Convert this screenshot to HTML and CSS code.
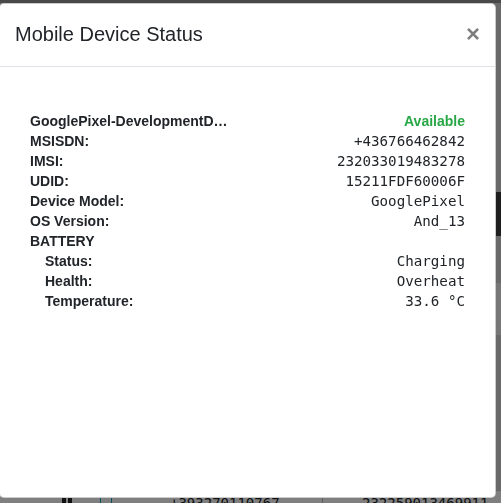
FILE: index.html
```html
<!DOCTYPE html>
<html lang="en">
<head>
  <meta charset="UTF-8" />
  <meta name="viewport" content="width=device-width, initial-scale=1.0"/>
  <title>Mobile Device Status</title>
  <link rel="stylesheet" href="styles.css">
</head>
<body>

  <div class="page">
    <div class="page-top"></div>
    <div class="page-gap first"></div>
    <div class="page-row dark"><span class="row-end"></span></div>
    <div class="page-gap second"></div>
    <div class="page-row light"><span class="row-end"></span></div>
    <div class="page-gap third"></div>
    <div class="device-row">
      <span class="cell icon"><i></i><i></i></span>
      <span class="cell check"><i></i></span>
      <span class="cell number">+393270110767</span>
      <span class="cell sep"></span>
      <span class="cell number">232259013469911</span>
    </div>
  </div>

  <div class="backdrop">
    <div class="modal">
      <div class="modal-header">
        <h5 class="modal-title">Mobile Device Status</h5>
        <button class="close" type="button">&times;</button>
      </div>
      <div class="modal-body">
        <div class="status-grid">
          <div class="label name">GooglePixel-DevelopmentDevice01</div>
          <div class="value available">Available</div>

          <div class="label">MSISDN:</div>
          <div class="value">+436766462842</div>

          <div class="label">IMSI:</div>
          <div class="value">232033019483278</div>

          <div class="label">UDID:</div>
          <div class="value">15211FDF60006F</div>

          <div class="label">Device Model:</div>
          <div class="value">GooglePixel</div>

          <div class="label">OS Version:</div>
          <div class="value">And_13</div>

          <div class="label">BATTERY</div>
          <div class="value"></div>

          <div class="label sub">Status:</div>
          <div class="value">Charging</div>

          <div class="label sub">Health:</div>
          <div class="value">Overheat</div>

          <div class="label sub">Temperature:</div>
          <div class="value">33.6 &deg;C</div>
        </div>
      </div>
    </div>
  </div>

</body>
</html>
```

FILE: styles.css
```css
html, body {
  margin: 0;
  height: 100%;
  overflow: hidden;
}

body {
  font-family: "Liberation Sans", Arial, sans-serif;
  background: #d4d4d4;
  color: #212529;
}

/* page under the modal */
.page-top {
  height: 3px;
  background: #939393;
}

.page-gap.first { height: 189px; }
.page-gap.second { height: 47px; }
.page-gap.third { height: 155px; }

.page-row {
  display: flex;
  justify-content: flex-end;
}

.page-row.dark { height: 44px; }
.page-row.light { height: 52px; }

.row-end {
  width: 60px;
}

.dark .row-end { background: #3c3c3c; }
.light .row-end { background: #eeeeee; }

.device-row {
  display: flex;
  align-items: flex-start;
  height: 40px;
  padding: 4px 0 0 62px;
  background: #ffffff;
  border-top: 1px solid #cccccc;
  font-family: "DejaVu Sans Mono", monospace;
  font-size: 14px;
}

.cell {
  flex-shrink: 0;
}

.cell.icon {
  display: flex;
  gap: 2px;
  width: 38px;
  padding-top: 2px;
}

.cell.icon i {
  width: 4px;
  height: 12px;
  background: #222;
}

.cell.check {
  width: 70px;
  padding-top: 2px;
}

.cell.check i {
  display: block;
  width: 10px;
  height: 10px;
  border: 1px solid #17a2b8;
}

.cell.number {
  width: 152px;
}

.cell.sep {
  width: 1px;
  height: 30px;
  margin: -4px 39px 0 0;
  background: #bbbbbb;
}

/* modal */
.backdrop {
  position: fixed;
  inset: 0;
  background: rgba(0, 0, 0, 0.5);
  padding: 3px 5px 5px 0;
}

.modal {
  height: 495px;
  margin-left: -1px;
  background: #ffffff;
  border: 1px solid rgba(0, 0, 0, 0.2);
  border-radius: 5px;
  box-sizing: border-box;
}

.modal-header {
  display: flex;
  justify-content: space-between;
  align-items: center;
  padding: 15px 15px 17px 15px;
  border-bottom: 1px solid #dee2e6;
}

.modal-title {
  margin: 0;
  font-size: 20px;
  font-weight: normal;
  line-height: 30px;
}

.close {
  padding: 0;
  margin-right: 0;
  border: none;
  background: none;
  font-family: "Liberation Sans", Arial, sans-serif;
  font-size: 24px;
  font-weight: bold;
  line-height: 1;
  color: #000;
  opacity: 0.5;
  cursor: pointer;
}

.modal-body {
  padding: 44px 30px 15px 30px;
}

.status-grid {
  display: grid;
  grid-template-columns: 1fr auto;
  font-size: 14px;
  line-height: 20px;
}

.label {
  font-weight: bold;
  white-space: nowrap;
}

.label.name {
  max-width: 201px;
  overflow: hidden;
  text-overflow: ellipsis;
}

.label.sub {
  padding-left: 15px;
}

.value {
  text-align: right;
  font-family: "DejaVu Sans Mono", monospace;
  font-size: 14.2px;
}

.value.available {
  font-family: "Liberation Sans", Arial, sans-serif;
  font-size: 14px;
  font-weight: bold;
  color: #28a745;
}
```
